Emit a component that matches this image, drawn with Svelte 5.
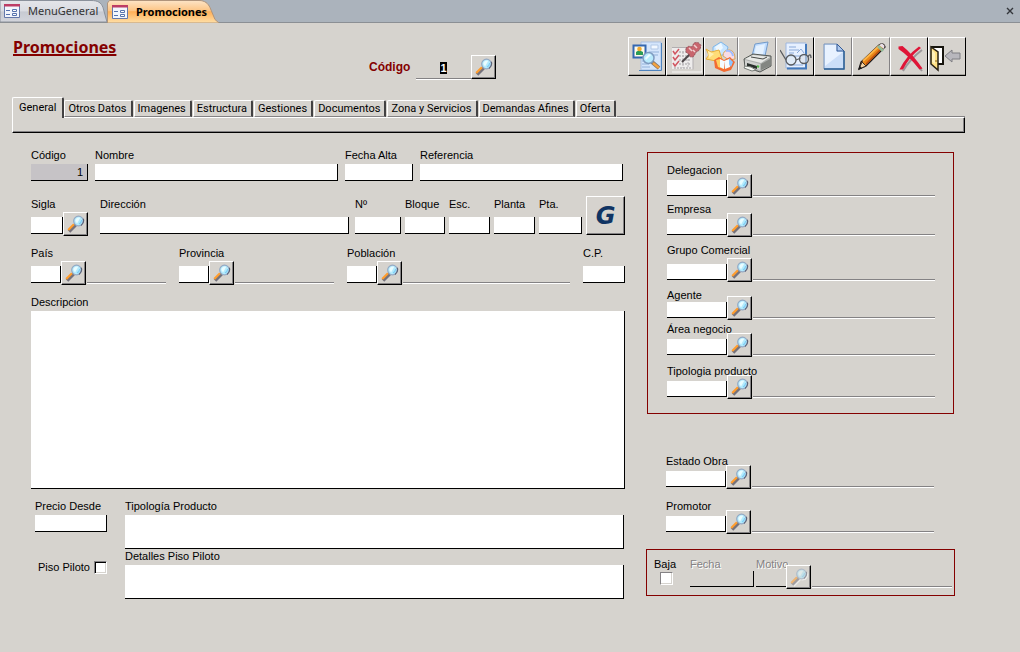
<script lang="ts">
  import { onMount } from 'svelte';

  type Lookup = { id: string; label: string; spacing?: string };

  const tabs = [
    'General',
    'Otros Datos',
    'Imagenes',
    'Estructura',
    'Gestiones',
    'Documentos',
    'Zona y Servicios',
    'Demandas Afines',
    'Oferta'
  ];

  const tools = [
    { name: 'Vista de ficha', icon: 'find', dark: true },
    { name: 'Tareas', icon: 'tasks', dark: true },
    { name: 'Enlaces', icon: 'office' },
    { name: 'Imprimir', icon: 'print' },
    { name: 'Vista previa', icon: 'preview', dark: true },
    { name: 'Nuevo', icon: 'new' },
    { name: 'Editar', icon: 'edit' },
    { name: 'Eliminar', icon: 'delete', dark: true },
    { name: 'Salir', icon: 'exit', dark: true }
  ];

  const addressFields = [
    { id: 'numero', label: 'Nº' },
    { id: 'bloque', label: 'Bloque' },
    { id: 'escalera', label: 'Esc.' },
    { id: 'planta', label: 'Planta' },
    { id: 'puerta', label: 'Pta.' }
  ];

  const placeFields: Lookup[] = [
    { id: 'pais', label: 'País' },
    { id: 'provincia', label: 'Provincia' },
    { id: 'poblacion', label: 'Población' }
  ];

  const companyFields: Lookup[] = [
    { id: 'delegacion', label: 'Delegacion' },
    { id: 'empresa', label: 'Empresa' },
    { id: 'grupo', label: 'Grupo Comercial', spacing: 'loose' },
    { id: 'agente', label: 'Agente', spacing: 'tight' },
    { id: 'area', label: 'Área negocio' },
    { id: 'tipologia', label: 'Tipologia producto' }
  ];

  const workFields: Lookup[] = [
    { id: 'estado', label: 'Estado Obra' },
    { id: 'promotor', label: 'Promotor' }
  ];

  let activeTab = $state('General');
  let codeInput: HTMLInputElement;

  onMount(() => {
    codeInput.focus();
    codeInput.select();
  });
</script>

{#snippet lens()}
  <svg class="lens" viewBox="0 0 18 18" aria-hidden="true">
    <path d="M2 16.500 8.500 10" stroke="#75727c" stroke-width="3.6" />
    <path d="M1.200 15 7 9.200" stroke="#ff9d2e" stroke-width="2.2" />
    <circle cx="11.500" cy="6" r="4.800" fill="#b4ebfd" stroke="#93a9c4" stroke-width="1.200" />
    <path d="M16.300 3.800q1.300 4-2.300 6.600" fill="none" stroke="#5d6379" stroke-width="1.200" />
    <path d="M8.300 6a3.500 3.500 0 0 1 5-3.200L10 8.500z" fill="#e9fcff" />
    <path d="M12 9q2.300-1 2.700-4" fill="none" stroke="#7fcdf5" stroke-width="1.300" />
  </svg>
{/snippet}

{#snippet formIcon()}
  <svg class="form-icon" viewBox="0 0 16 16" aria-hidden="true">
    <path d="M.5 1.5h15v13H.5z" fill="#f2f5fc" stroke="#6478aa" />
    <path d="M0 1h16v2.5H0z" fill="#bd3c65" />
    <path d="M2 7.5h4M2 11.5h4" stroke="#5673ae" />
    <path d="M8.5 6.5h4v2h-4zM8.5 10.5h4v2h-4z" fill="#fff" stroke="#5673ae" />
  </svg>
{/snippet}

{#snippet lookup(field: Lookup)}
  <div class="field {field.spacing ?? ''}">
    <label for={field.id}>{field.label}</label>
    <div class="lookup">
      <input id={field.id} type="text" />
      <button type="button" class="pick" aria-label="Buscar {field.label}">{@render lens()}</button>
      <input class="result" type="text" readonly aria-label="Nombre de {field.label}" />
    </div>
  </div>
{/snippet}

{#snippet toolIcon(icon: string)}
  <svg viewBox="0 0 32 32" aria-hidden="true">
    {#if icon === 'find'}
      <path d="M9 1h20v28H9z" fill="#d4e5fb" stroke="#a9c0e2" />
      <path d="M29.5 2v27.5H7" fill="none" stroke="#4e83bd" />
      <path d="M19 4h7v4h-7z" fill="#f2f8ff" stroke="#b2c8e6" />
      <path d="M17 11h10M17 14h9M10 20h5M10 23h7M10 26h8" stroke="#b3cbea" stroke-width="2" />
      <path d="M1.500 4.500h12v12h-12z" fill="#fffbe9" stroke="#3568b2" stroke-width="2" />
      <path d="M4 14v-3l3-2 4 2v3z" fill="#2d9c55" />
      <circle cx="7.500" cy="8" r="2.300" fill="#f2aa30" />
      <path d="m20 21 7 6" stroke="#7d716b" stroke-width="4" />
      <path d="m21 22 6 5" stroke="#f4a340" stroke-width="2.500" />
      <circle cx="16.500" cy="17" r="5.500" fill="#b9ebfd" stroke="#7f9cc0" stroke-width="1.500" />
      <path d="m13 17 4-4 2 1-5 5z" fill="#effdff" />
    {:else if icon === 'tasks'}
      <path d="M2 6h21v22H2z" fill="#eeecec" />
      <path d="M2 6.500h21v22" fill="none" stroke="#b1aeb0" />
      <path d="M9 11h11M9 15h12M9 19h12M9 23h12M4 27h17" stroke="#9f9da0" stroke-dasharray="2 1" />
      <path d="M13 11v16M18 15v12" stroke="#b8b4b8" stroke-dasharray="2 1" />
      <path d="m3 10 2 3 4-5M3 16l2 3 4-5M3 22l2 3 4-5" fill="none" stroke="#d05560" stroke-width="1.500" />
      <path d="m12 21 8-8" stroke="#4d4649" stroke-width="2" />
      <path d="M16 8q1-4 6-2l2-4q5-2 7 3-1 5-5 6l-2 4q-4 3-5-2-4-1-3-5z" fill="#c8656d" stroke="#96525a" stroke-dasharray="2 1" />
      <path d="m19 7 3 3m2-6 3 3m-4 2 2 2" stroke="#efd0d0" stroke-width="1.500" />
      <path d="M2 31h30V5" fill="none" stroke="#f8f7f6" />
    {:else if icon === 'office'}
      <path d="m8 6 8-5 7 5-2 7-8 2-5-4z" fill="#c7e5ff" stroke="#80b7e8" />
      <path d="m10 6 6-4 2 5-5 5z" fill="#eef8ff" />
      <path d="m1 8 5 3 8-2 3 9-6 2-10-2 3-4z" fill="#ffdc77" stroke="#e6ad3b" />
      <path d="m3 10 6 3-5 4z" fill="#ffefb0" />
      <path d="M18 15q0-6 6-6t6 9l-6 1z" fill="#f7dce6" stroke="#d8a55f" />
      <path d="M21 10q6-1 7 5" fill="none" stroke="#9ebcff" stroke-width="2" />
      <path d="m9 19 5-3 5 3 6-3 5 5-4 8-7 2-9-4z" fill="#f36b31" />
      <path d="m11 19 4-1 4 10-6-2z" fill="#ffcf61" />
      <path d="m15 18 4 2v8l-4-2zM19 20l5-2 1 8-5 2z" fill="#f5fbff" />
      <path d="m24 17 4 4-2 5-2-3z" fill="#8bc5ff" />
    {:else if icon === 'print'}
      <path d="m10 15 3-12 13-2-3 14z" fill="#bfdcff" stroke="#729ac9" />
      <path d="m14 5 9-2-2 10-9 2z" fill="#e4f1ff" />
      <path d="m2 18 9-5 18 2v10l-11 6-15-5z" fill="#aeb0ae" stroke="#555955" />
      <path d="m3 18 8-4 17 2-9 6z" fill="#e8e9e6" />
      <path d="m3 19 15 4v6L3 25z" fill="#d0d1cf" />
      <path d="m19 23 9-5v7l-9 4z" fill="#838682" />
      <path d="m9 16 12 2 4-2" fill="none" stroke="#454845" />
      <path d="m5 22 10 3v3L5 25z" fill="#292f2c" />
      <path d="m3 25 6 1 5 3-4 1-8-3z" fill="#f7faf5" stroke="#777b77" />
      <path d="m15 25 2 1" stroke="#53b84c" stroke-width="2" />
    {:else if icon === 'preview'}
      <path d="M6 2h20v25H6z" fill="#e6f0ff" stroke="#9db6df" />
      <path d="M26 3v24.500H7" fill="none" stroke="#4378ba" stroke-width="2" />
      <path d="M9 6h7M9 9h10M9 12h5M17 12l4-4 3 4M9 15h14M9 24h14" stroke="#8baad9" fill="none" />
      <path d="m0 9 6 10M16 19l5-2M28 16c1-3 3-3 3 1" fill="none" stroke="#585b5f" stroke-width="1.300" />
      <circle cx="11" cy="19" r="5" fill="#dce7f1" fill-opacity=".6" stroke="#585b5f" stroke-width="1.300" />
      <circle cx="24" cy="18" r="4.500" fill="#dce0e4" fill-opacity=".6" stroke="#585b5f" stroke-width="1.300" />
    {:else if icon === 'new'}
      <path d="M6 3h13l7 7v18H6z" fill="#cbdef8" stroke="#7894bc" />
      <path d="M7 4h11v7h7L7 25z" fill="#e8f2ff" />
      <path d="M19 3v7h7z" fill="#adc8ee" stroke="#345a94" />
      <path d="M26 10v18H6" fill="none" stroke="#2c6095" stroke-width="1.500" />
    {:else if icon === 'edit'}
      <path d="m3 28 2-7L23 4q5-3 6 2L10 25z" fill="#e98617" stroke="#211b1c" stroke-width="1.300" />
      <path d="M7 20 23 5" stroke="#ffb548" stroke-width="2" />
      <path d="m10 23 15-15" stroke="#be4c10" stroke-width="1.500" />
      <path d="m3 28 3-7 4 4z" fill="#f4d4a5" stroke="#3e3028" />
      <path d="m2.500 28.500 1-4 2.500 3z" fill="#171717" />
      <path d="m21 6 2-2 5 5-2 2z" fill="#92bb9a" />
      <path d="m23 4 3-1.500 2.500 2L28 8z" fill="#e8dfe7" />
    {:else if icon === 'delete'}
      <path d="m7 8 4 2q8 8 17 20M28 9Q16 18 9 30" fill="none" stroke="#9b989a" stroke-width="2" />
      <path d="m4.500 5.500 4-.5q10 8 20 22.500l-3 1Q15 15 4.500 8z" fill="#df1537" />
      <path d="m25 5.500 2 1.500Q15 16 9 28.500H5.500Q12 15 25 5.500z" fill="#df1537" />
    {:else if icon === 'exit'}
      <path d="M2 6h12v17H8" fill="#fff" stroke="#16140d" stroke-width="2" />
      <path d="m2 6 7 5v18l-7-6z" fill="#ffe083" stroke="#282012" stroke-width="1.500" />
      <path d="m3 9 3 3v11l-3-2z" fill="#fff1bb" />
      <path d="M6 20h2" stroke="#815d15" />
      <path d="m16 15 7-6v3h8v6h-8v3z" fill="#b8b7bd" stroke="#7f7e83" />
    {/if}
  </svg>
{/snippet}

<div class="window">
  <nav class="documents">
    <button type="button" class="document">
      <svg class="tab-shape" viewBox="0 0 107 22" preserveAspectRatio="none" aria-hidden="true">
        <defs>
          <linearGradient id="plain" x2="0" y2="1">
            <stop offset="0" stop-color="#e4e5e9" />
            <stop offset=".5" stop-color="#dadce2" />
            <stop offset=".52" stop-color="#c7cad2" />
            <stop offset="1" stop-color="#d3d5dc" />
          </linearGradient>
        </defs>
        <path d="M0 .5h91c7 0 10 2 12 7l4 14.500H0z" fill="url(#plain)" stroke="#8b919b" />
      </svg>
      {@render formIcon()}
      <span>MenuGeneral</span>
    </button>
    <button type="button" class="document current">
      <svg class="tab-shape" viewBox="0 0 112 23" preserveAspectRatio="none" aria-hidden="true">
        <defs>
          <linearGradient id="warm" x2="0" y2="1">
            <stop offset="0" stop-color="#fde4c6" />
            <stop offset=".45" stop-color="#fdc585" />
            <stop offset=".5" stop-color="#ffb058" />
            <stop offset="1" stop-color="#ffe0a8" />
          </linearGradient>
        </defs>
        <path d="M.5 23V3l2-2.500H92c6 0 9 3 11 7l5 12 4 3.500z" fill="url(#warm)" stroke="#b0947b" />
      </svg>
      {@render formIcon()}
      <span>Promociones</span>
    </button>
    <button type="button" class="close" aria-label="Cerrar">
      <svg viewBox="0 0 8 8" aria-hidden="true"><path d="m1 1 6 6m0-6L1 7" stroke="#33363b" stroke-width="1.400" /></svg>
    </button>
  </nav>

  <header>
    <h1>Promociones</h1>
    <div class="code-search">
      <label for="buscar-codigo">Código</label>
      <input id="buscar-codigo" type="text" value="1" bind:this={codeInput} />
      <button type="button" class="pick" aria-label="Buscar código">{@render lens()}</button>
    </div>
    <div class="toolbar">
      {#each tools as tool}
        <button type="button" class={tool.icon} class:dark={tool.dark} aria-label={tool.name}>
          {@render toolIcon(tool.icon)}
        </button>
      {/each}
    </div>
  </header>

  <div class="tabs" role="tablist">
    {#each tabs as tab}
      <button type="button" role="tab" aria-selected={tab === activeTab} onclick={() => (activeTab = tab)}>{tab}</button>
    {/each}
    <div class="tabs-rest"></div>
  </div>
  <div class="strip"></div>

  <main>
    <div class="left">
      <div class="row general">
        <div class="field">
          <label for="codigo">Código</label>
          <input id="codigo" class="locked" type="text" value="1" readonly />
        </div>
        <div class="field">
          <label for="nombre">Nombre</label>
          <input id="nombre" type="text" />
        </div>
        <div class="field">
          <label for="fecha-alta">Fecha Alta</label>
          <input id="fecha-alta" type="text" />
        </div>
        <div class="field">
          <label for="referencia">Referencia</label>
          <input id="referencia" type="text" />
        </div>
      </div>

      <div class="row address">
        <div class="field">
          <label for="sigla">Sigla</label>
          <div class="lookup">
            <input id="sigla" type="text" />
            <button type="button" class="pick" aria-label="Buscar sigla">{@render lens()}</button>
          </div>
        </div>
        <div class="field street">
          <label for="direccion">Dirección</label>
          <input id="direccion" type="text" />
        </div>
        {#each addressFields as field}
          <div class="field">
            <label for={field.id}>{field.label}</label>
            <input id={field.id} type="text" />
          </div>
        {/each}
        <button type="button" class="map">G</button>
      </div>

      <div class="row place">
        {#each placeFields as field}
          {@render lookup(field)}
        {/each}
        <div class="field">
          <label for="cp">C.P.</label>
          <input id="cp" type="text" />
        </div>
      </div>

      <div class="field description">
        <label for="descripcion">Descripcion</label>
        <textarea id="descripcion"></textarea>
      </div>

      <div class="bottom">
        <div class="side">
          <div class="field">
            <label for="precio">Precio Desde</label>
            <input id="precio" type="text" />
          </div>
          <div class="pilot">
            <label for="piso-piloto">Piso Piloto</label>
            <input id="piso-piloto" type="checkbox" />
          </div>
        </div>
        <div class="notes">
          <div class="field">
            <label for="tipologia-producto">Tipología Producto</label>
            <textarea id="tipologia-producto"></textarea>
          </div>
          <div class="field">
            <label for="detalles">Detalles Piso Piloto</label>
            <textarea id="detalles"></textarea>
          </div>
        </div>
      </div>
    </div>

    <div class="right">
      <section class="company">
        {#each companyFields as field}
          {@render lookup(field)}
        {/each}
      </section>

      <section class="work">
        {#each workFields as field}
          {@render lookup(field)}
        {/each}
      </section>

      <section class="leave">
        <div class="leave-check">
          <label for="baja">Baja</label>
          <input id="baja" type="checkbox" />
        </div>
        <div class="field off">
          <label for="fecha-baja">Fecha</label>
          <input id="fecha-baja" type="text" disabled />
        </div>
        <div class="field off">
          <label for="motivo">Motivo</label>
          <div class="lookup">
            <input id="motivo" type="text" disabled />
            <button type="button" class="pick" aria-label="Buscar motivo" disabled>{@render lens()}</button>
            <input class="result" type="text" readonly aria-label="Nombre de Motivo" />
          </div>
        </div>
      </section>
    </div>
  </main>
</div>

<style>
  :global(body) {
    background: #d6d3ce;
  }

  .window {
    min-height: 100vh;
    background: #d6d3ce;
    color: #000;
    font: 11px/14px 'Liberation Sans', Arial, sans-serif;
  }

  .window * {
    box-sizing: border-box;
  }

  button,
  input,
  textarea {
    margin: 0;
    padding: 0;
    border: 0;
    border-radius: 0;
    background: none;
    color: inherit;
    font: inherit;
    outline: none;
  }

  /* document tabs */
  .documents {
    display: flex;
    height: 23px;
    border-bottom: 1px solid #8b8f94;
    background: #abb3bc;
    font: 11px/14px 'Noto Sans', Tahoma, sans-serif;
  }

  .document {
    position: relative;
    display: flex;
    width: 107px;
    height: 22px;
    align-items: center;
    gap: 8px;
    padding-left: 4px;
    color: #333;
  }

  .document.current {
    width: 112px;
    height: 23px;
    padding-left: 5px;
    color: #000;
    font-weight: bold;
  }

  .tab-shape {
    position: absolute;
    inset: 0;
    width: 100%;
    height: 100%;
  }

  .document span,
  .form-icon {
    position: relative;
  }

  .form-icon {
    width: 16px;
    height: 16px;
    flex: none;
  }

  .close {
    width: 20px;
    height: 22px;
    margin-left: auto;
  }

  .close svg {
    width: 8px;
    height: 8px;
  }

  /* heading and toolbar */
  header {
    display: grid;
    grid-template-columns: 356px auto 1fr;
    padding: 14px 54px 0 13px;
  }

  h1 {
    margin: 0;
    color: #840000;
    font: bold 16px/20px 'Noto Sans', Tahoma, sans-serif;
    text-decoration: underline;
    text-decoration-thickness: 2px;
  }

  .code-search {
    display: flex;
    height: 24px;
    align-items: center;
    margin-top: 18px;
  }

  .code-search label {
    width: 47px;
    color: #840000;
    font-size: 12px;
    font-weight: bold;
  }

  .code-search input {
    align-self: flex-end;
    width: 55px;
    height: 22px;
    border-bottom: 1px solid #848284;
    box-shadow: 0 1px #fff;
    font-weight: bold;
    text-align: center;
  }

  .code-search input::selection {
    background: #000;
    color: #fff;
  }

  .toolbar {
    display: flex;
    height: 39px;
    justify-self: end;
  }

  .toolbar button {
    width: 38px;
    padding: 2px 3px;
    border: 1px solid #fff;
    border-right-color: #848284;
    border-bottom-color: #000;
    box-shadow: inset 0 -1px #a5a29c;
  }

  .toolbar .office {
    width: 34px;
    padding: 2px 0;
  }

  .toolbar .exit {
    padding: 2px 0;
  }

  .toolbar .dark {
    border-right-color: #000;
  }

  .toolbar svg {
    display: block;
    width: 32px;
    height: 32px;
  }

  /* page tabs */
  .tabs {
    display: flex;
    height: 20px;
    align-items: flex-end;
    margin: 18px 55px 0 12px;
    font: 11px/14px Roboto, Tahoma, sans-serif;
  }

  .tabs button {
    height: 17px;
    padding: 0 4px 0 3px;
    margin-right: 1px;
    border: 1px solid #fff;
    border-right: 2px solid #424142;
    border-bottom-color: #848284;
    border-radius: 2px 2px 0 0;
    white-space: nowrap;
  }

  .tabs button[aria-selected='true'] {
    height: 21px;
    padding: 0 6px;
    margin: 0 0 -1px;
    border-bottom: 0;
    background: #d6d3ce;
    z-index: 1;
  }

  .tabs-rest {
    flex: 1;
    border-bottom: 1px solid #848284;
  }

  .strip {
    height: 16px;
    margin: 0 55px 0 12px;
    border: 1px solid #fff;
    border-right-color: #000;
    border-bottom-color: #000;
    box-shadow: inset -1px -1px #848284;
  }

  /* form */
  main {
    display: grid;
    grid-template-columns: minmax(0, 1fr) 309px;
    gap: 21px;
    padding: 15px 65px 40px 31px;
  }

  .field {
    display: flex;
    min-width: 0;
    flex-direction: column;
    gap: 3px;
  }

  .field > label {
    height: 14px;
    white-space: nowrap;
  }

  .field input {
    width: 100%;
    min-width: 0;
    height: 17px;
    border: solid #000;
    border-width: 0 1px 1px 0;
    background: #fff;
  }

  .field .locked {
    padding-right: 4px;
    background: #c6c3c6;
    text-align: right;
  }

  textarea {
    display: block;
    width: 100%;
    height: 34px;
    border: solid #000;
    border-width: 0 1px 1px 0;
    background: #fff;
    resize: none;
  }

  .lookup {
    display: flex;
    height: 17px;
    align-items: flex-end;
  }

  .lookup input {
    flex: none;
    width: 30px;
  }

  .field .result {
    flex: 1;
    margin-left: 1px;
    border-width: 0 0 1px;
    border-color: #848284;
    background: none;
    box-shadow: 0 1px #fff;
  }

  .pick {
    display: grid;
    flex: none;
    width: 25px;
    height: 24px;
    place-items: center;
    border: 1px solid #fff;
    border-right-color: #000;
    border-bottom-color: #000;
    background: #d6d3ce;
    box-shadow: inset -1px -1px #848284;
  }

  .lookup .pick {
    margin-bottom: -2px;
  }

  .lens {
    width: 18px;
    height: 18px;
  }

  .row {
    display: grid;
  }

  .general {
    grid-template-columns: 57px 243fr 68px 203fr;
    gap: 7px;
    padding-right: 2px;
  }

  .general .field {
    gap: 2px;
  }

  .address {
    grid-template-columns: 57px 1fr 46px 40px 41px 41px 43px 39px;
    gap: 4px;
    margin-top: 15px;
  }

  .address .field,
  .place .field {
    gap: 6px;
    padding-top: 1px;
  }

  .address .lookup input {
    width: 32px;
  }

  .address .street {
    padding: 1px 2px 0 8px;
  }

  .map {
    height: 39px;
    border: 1px solid #fff;
    border-right-color: #000;
    border-bottom-color: #000;
    box-shadow: inset -1px -1px #848284;
    color: #103463;
    font: italic bold 24px/36px 'DejaVu Sans', Verdana, sans-serif;
  }

  .place {
    grid-template-columns: 135fr 155fr 223fr 42px;
    gap: 13px;
    margin-top: 10px;
  }

  .description {
    margin-top: 12px;
    gap: 2px;
  }

  .description textarea {
    height: 178px;
  }

  .bottom {
    display: grid;
    grid-template-columns: 72px 1fr;
    gap: 18px;
    margin-top: 10px;
    padding: 0 1px 0 4px;
  }

  .side .field,
  .notes .field {
    gap: 2px;
  }

  .pilot {
    display: flex;
    align-items: center;
    justify-content: flex-end;
    gap: 4px;
    margin-top: 28px;
    white-space: nowrap;
  }

  input[type='checkbox'] {
    width: 13px;
    height: 13px;
    appearance: none;
    border: 1px solid #848284;
    border-right-color: #fff;
    border-bottom-color: #fff;
    background: #fff;
    box-shadow: inset 1px 1px #000, inset -1px -1px #d6d3ce;
  }

  input[type='checkbox']:checked {
    background: #000;
  }

  .company {
    display: grid;
    grid-template-rows: 39px 41px 45px 34px 42px 33px;
    margin: 4px 1px 0;
    padding: 10px 18px 16px 19px;
    border: 1px solid #840000;
  }

  .company .loose {
    gap: 7px;
  }

  .company .tight {
    gap: 0;
  }

  .right .lookup input:first-child {
    width: 60px;
  }

  .right .field input {
    height: 16px;
  }

  .right .lookup {
    height: 16px;
  }

  .work {
    display: grid;
    gap: 12px;
    margin-top: 40px;
    padding: 0 21px 0 20px;
  }

  .leave {
    display: grid;
    grid-template-columns: 34px 64px 1fr;
    gap: 2px;
    margin-top: 17px;
    padding: 7px 2px 8px 7px;
    border: 1px solid #840000;
  }

  .leave .off {
    gap: 0;
  }

  .leave-check {
    display: flex;
    flex-direction: column;
  }

  .leave-check input {
    margin: 1px 0 0 6px;
    box-shadow: inset -1px -1px #d6d3ce;
  }

  .off {
    color: #848284;
    text-shadow: 1px 1px #fff;
  }

  .off input:disabled {
    background: none;
  }

  .right .off .lookup input:first-child {
    width: 30px;
    border-right: 0;
  }

  .off .lens {
    opacity: 0.55;
    filter: drop-shadow(1px 1px #fff);
  }
</style>
